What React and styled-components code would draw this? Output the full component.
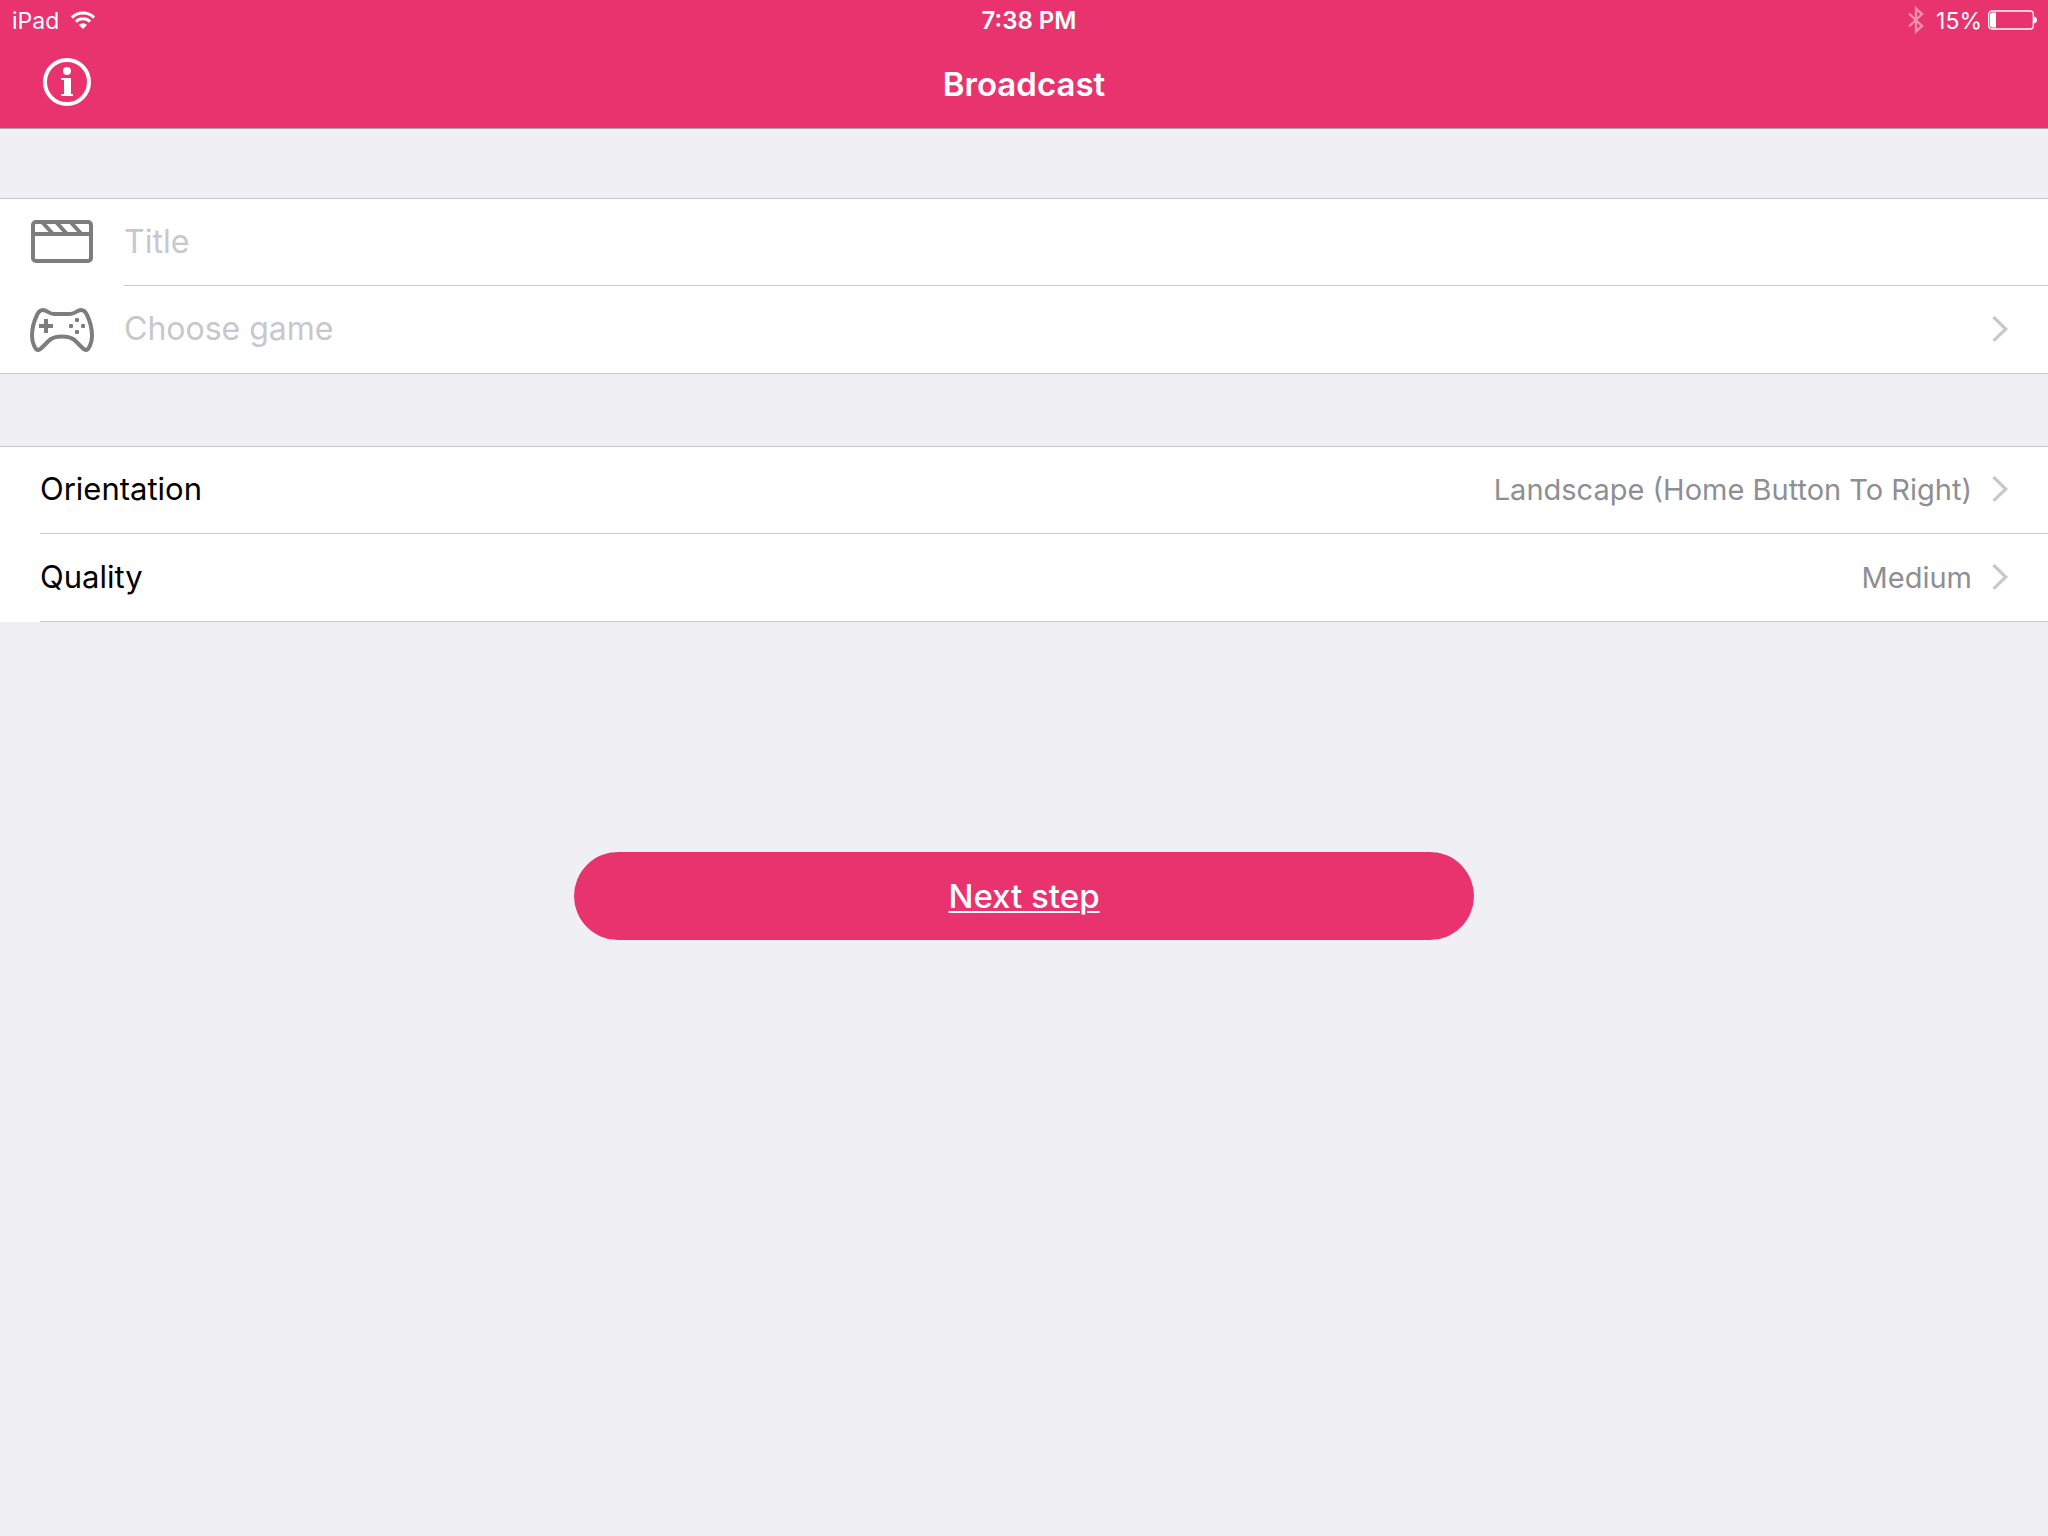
import React from 'react'
import styled, { createGlobalStyle } from 'styled-components'

const GlobalStyle = createGlobalStyle`
  *, *::before, *::after {
    box-sizing: border-box;
  }

  body {
    background: #efeff4;
    font-family: Inter, "Liberation Sans", sans-serif;
    margin: 0;
  }

  button, input {
    background: none;
    border: 0;
    border-radius: 0;
    font: inherit;
    margin: 0;
    padding: 0;
  }

  svg {
    display: block;
    flex: none;
  }
`

const Header = styled.header`
  background: #e8336f;
  border-bottom: 1px solid #a7a7aa;
  color: #fff;
`

const StatusBar = styled.div`
  align-items: center;
  display: grid;
  font-size: 23px;
  grid-template-columns: 1fr auto 1fr;
  height: 40px;
  padding: 0 10px 0 12px;
`

const StatusGroup = styled.div`
  align-items: center;
  display: flex;
  gap: ${props => props.$gap}px;
  justify-content: ${props => (props.$end ? 'flex-end' : 'flex-start')};
`

const StatusText = styled.span`
  line-height: 38px;
  padding-top: 2px;
`

const Clock = styled.time`
  font-size: 24px;
  font-weight: 600;
  line-height: 38px;
  padding: 2px 0 0 8px;
`

const NavBar = styled.div`
  align-items: center;
  display: grid;
  grid-template-columns: 1fr auto 1fr;
  height: 88px;
  padding: 0 43px;
`

const InfoButton = styled.button`
  color: #fff;
  height: 48px;
  margin-bottom: 4px;
  width: 48px;
`

const PageTitle = styled.h1`
  font-size: 33px;
  font-weight: 600;
  line-height: 40px;
  margin: 0;
`

const Form = styled.form`
  display: flex;
  flex-direction: column;
  gap: 72px;
  padding-top: 69px;
`

const List = styled.div`
  background: #fff;
  border-top: 1px solid #c8c7cc;
  border-bottom: ${props => (props.$closed ? '1px solid #c8c7cc' : '0')};
`

const Row = styled.div`
  align-items: stretch;
  display: flex;
  padding-left: ${props => (props.$icon ? 0 : 40)}px;
`

const RowIcon = styled.span`
  align-items: center;
  color: #7d7d7d;
  display: flex;
  flex: none;
  justify-content: center;
  width: 124px;
`

const RowBody = styled.div`
  border-bottom: ${props => (props.$line ? '1px solid #c8c7cc' : '0')};
  display: flex;
  flex: 1;
  height: ${props => (props.$line && !props.$first ? 88 : 87)}px;
`

const TitleInput = styled.input`
  color: #000;
  font-size: 32px;
  outline: none;
  padding-bottom: 2px;
  width: 100%;

  &::placeholder {
    color: #c7c7cd;
    opacity: 1;
  }
`

const RowButton = styled.button`
  align-items: center;
  color: #000;
  cursor: pointer;
  display: flex;
  font-size: 31px;
  gap: 19px;
  line-height: 40px;
  padding: 0 39px 2px 0;
  text-align: left;
  width: 100%;
`

const Label = styled.span`
  flex: 1;
`

const Placeholder = styled(Label)`
  color: #c7c7cd;
  font-size: 32px;
`

const Value = styled.span`
  color: #8e8e93;
  font-size: 29px;
  padding-top: 2px;
`

const NextButton = styled.button`
  align-self: center;
  background: #e8336f;
  border-radius: 44px;
  color: #fff;
  cursor: pointer;
  font-size: 33px;
  font-weight: 500;
  height: 88px;
  margin: 158px 0 40px;
  max-width: 90%;
  text-decoration: underline;
  text-decoration-thickness: 2px;
  text-underline-offset: 3px;
  width: 900px;
`

const WifiIcon = () => (
  <svg width="26" height="20" viewBox="0 0 26 20" fill="none" stroke="currentColor" strokeWidth="3">
    <path d="M1.9 7.6a15.8 15.8 0 0 1 22.2 0" />
    <path d="M5.9 11.6a10.2 10.2 0 0 1 14.2 0" />
    <path d="M13 19l-4-4.1a5.7 5.7 0 0 1 8 0z" fill="currentColor" stroke="none" />
  </svg>
)

const BluetoothIcon = () => (
  <svg width="16" height="28" viewBox="0 0 16 28" fill="none" stroke="currentColor" strokeWidth="2.4" opacity="0.45">
    <path d="M1 7.5l13 12.5-6 5.500V2.500L14 8 1 20.5" />
  </svg>
)

const BatteryIcon = () => (
  <svg width="50" height="20" viewBox="0 0 50 20">
    <rect x="0.7" y="1" width="44.6" height="18" rx="3" fill="none" stroke="currentColor" strokeWidth="1.3" />
    <path d="M2 4.5a2 2 0 0 1 2-2h4v15H4a2 2 0 0 1-2-2zM46 6.5c4 .5 4 6.5 0 7z" fill="currentColor" />
  </svg>
)

const InfoIcon = () => (
  <svg width="48" height="48" viewBox="0 0 48 48" fill="currentColor">
    <circle cx="24" cy="24" r="22" fill="none" stroke="currentColor" strokeWidth="4" />
    <circle cx="24" cy="13" r="4" />
    <path d="M18 20h10v16h2v2H18v-2h3V22h-3z" />
  </svg>
)

const ClapperIcon = () => (
  <svg width="62" height="45" viewBox="0 0 62 45" fill="none" stroke="currentColor" strokeWidth="4">
    <rect x="2" y="2" width="58" height="39" rx="3" />
    <path d="M2 14h58M11 2l11 12M25 2l11 12M39.5 2l11 12" />
  </svg>
)

const GamepadIcon = () => (
  <svg width="64" height="44" viewBox="0 0 64 44" fill="none" stroke="currentColor" strokeWidth="4">
    <path d="M8 42C5.5 42 2 35 2 28C2 20 4.5 12 7 7C8.5 3.5 10.5 2 13 2C17 2 19 6 24 6H40C45 6 47 2 51 2C53.5 2 55.5 3.5 57 7C59.5 12 62 20 62 28C62 35 58.5 42 56 42C53 42 48 34.5 43 31C38 27.5 26 27.5 21 31C16 34.5 11 42 8 42Z" />
    <path d="M9 18h14M16 11v14" />
    <g fill="currentColor" stroke="none">
      <rect x="45" y="10" width="4" height="4" rx="1" />
      <rect x="39" y="16" width="4" height="4" rx="1" />
      <rect x="51" y="16" width="4" height="4" rx="1" />
      <rect x="45" y="22" width="4" height="4" rx="1" />
    </g>
  </svg>
)

const Chevron = () => (
  <svg width="18" height="26" viewBox="0 0 18 26" fill="none" stroke="#c7c7cc" strokeWidth="3.2">
    <path d="M2.5 1.2L14.8 13L2.5 24.8" />
  </svg>
)

const settings = [
  { label: 'Orientation', value: 'Landscape (Home Button To Right)' },
  { label: 'Quality', value: 'Medium' },
]

function App() {
  return (
    <>
      <GlobalStyle />
      <Header>
        <StatusBar>
          <StatusGroup $gap={11}>
            <StatusText>iPad</StatusText>
            <WifiIcon />
          </StatusGroup>
          <Clock>7:38 PM</Clock>
          <StatusGroup $end $gap={12}>
            <BluetoothIcon />
            <StatusGroup $gap={6}>
              <StatusText>15%</StatusText>
              <BatteryIcon />
            </StatusGroup>
          </StatusGroup>
        </StatusBar>
        <NavBar>
          <InfoButton type="button" aria-label="Info">
            <InfoIcon />
          </InfoButton>
          <PageTitle>Broadcast</PageTitle>
        </NavBar>
      </Header>

      <Form onSubmit={e => e.preventDefault()}>
        <List $closed>
          <Row $icon>
            <RowIcon as="label" htmlFor="title">
              <ClapperIcon />
            </RowIcon>
            <RowBody $first $line>
              <TitleInput id="title" aria-label="Title" placeholder="Title" />
            </RowBody>
          </Row>
          <Row $icon>
            <RowIcon>
              <GamepadIcon />
            </RowIcon>
            <RowBody>
              <RowButton type="button">
                <Placeholder>Choose game</Placeholder>
                <Chevron />
              </RowButton>
            </RowBody>
          </Row>
        </List>

        <List>
          {settings.map((item, i) => (
            <Row key={item.label}>
              <RowBody $first={i === 0} $line>
                <RowButton type="button">
                  <Label>{item.label}</Label>
                  <Value>{item.value}</Value>
                  <Chevron />
                </RowButton>
              </RowBody>
            </Row>
          ))}
        </List>

        <NextButton type="submit">Next step</NextButton>
      </Form>
    </>
  )
}

export default App
